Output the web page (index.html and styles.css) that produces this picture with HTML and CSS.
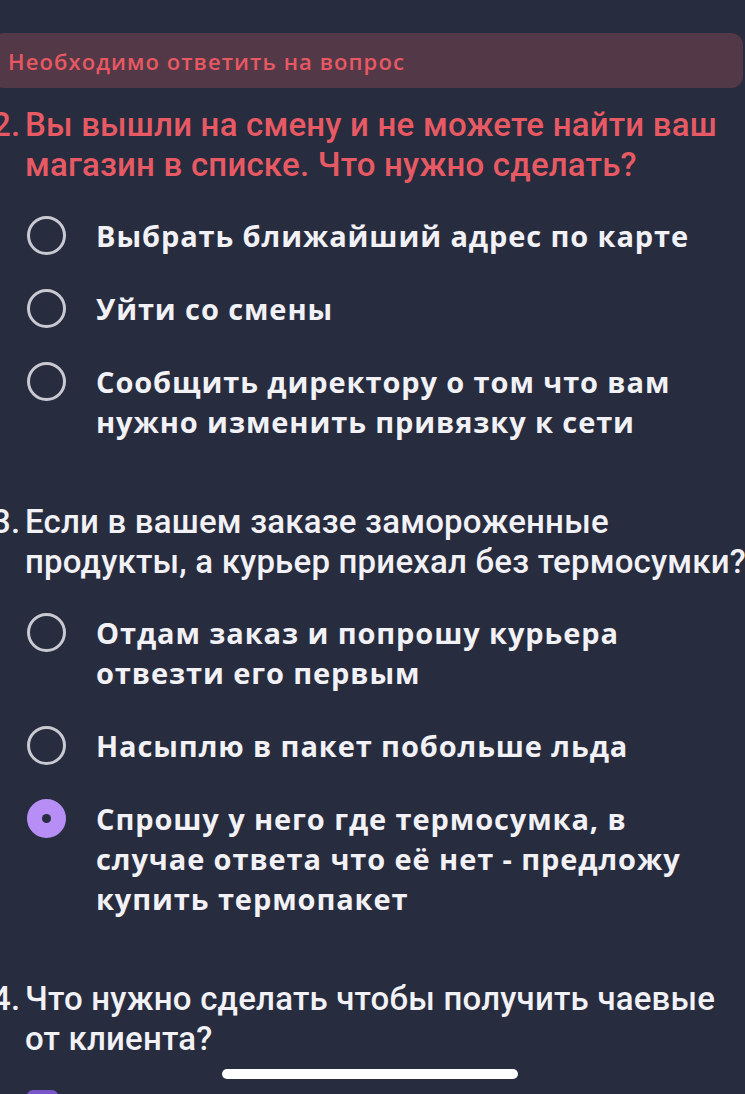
FILE: index.html
```html
<!DOCTYPE html>
<html lang="ru">
<head>
<meta charset="utf-8">
<link rel="stylesheet" href="styles.css">
</head>
<body>
<div class="page">
  <div class="banner">Необходимо ответить на вопрос</div>

  <div class="question error">
    <span class="num">2.</span>
    <span class="qtext">Вы вышли на смену и не можете найти ваш магазин в списке. Что нужно сделать?</span>
  </div>
  <ul class="options">
    <li class="option"><span class="radio"></span><span class="label">Выбрать ближайший адрес по карте</span></li>
    <li class="option"><span class="radio"></span><span class="label">Уйти со смены</span></li>
    <li class="option"><span class="radio"></span><span class="label">Сообщить директору о том что вам нужно изменить привязку к сети</span></li>
  </ul>

  <div class="question">
    <span class="num">3.</span>
    <span class="qtext">Если в вашем заказе замороженные продукты, а курьер приехал без термосумки?</span>
  </div>
  <ul class="options">
    <li class="option"><span class="radio"></span><span class="label">Отдам заказ и попрошу курьера отвезти его первым</span></li>
    <li class="option"><span class="radio"></span><span class="label">Насыплю в пакет побольше льда</span></li>
    <li class="option"><span class="radio checked"></span><span class="label">Спрошу у него где термосумка, в случае ответа что её нет - предложу купить термопакет</span></li>
  </ul>

  <div class="question">
    <span class="num">4.</span>
    <span class="qtext">Что нужно сделать чтобы получить чаевые от клиента?</span>
  </div>
  <ul class="options">
    <li class="option"><span class="checkbox"></span><span class="label">Вежливо общаться с курьером</span></li>
  </ul>
</div>
<div class="home-indicator"></div>
</body>
</html>
```
FILE: styles.css
```css
html, body {
  margin: 0;
  padding: 0;
}
body {
  width: 745px;
  height: 1094px;
  overflow: hidden;
  background: #272c3f;
  position: relative;
  font-family: "Open Sans", "Noto Sans", sans-serif;
  color: #f1f1f6;
}
.page {
  padding-top: 33px;
  margin-left: -8px;
  width: 760px;
}
.banner {
  background: #533848;
  border-radius: 12px;
  height: 55px;
  margin-right: 9px;
  display: flex;
  align-items: center;
  padding-left: 16px;
  color: #e85862;
  font-family: "Open Sans", sans-serif;
  font-weight: 600;
  font-size: 22px;
  letter-spacing: 1.1px;
}
.question {
  display: flex;
  padding-top: 4px;
  font-family: Roboto, "Noto Sans", sans-serif;
  font-weight: 500;
  font-size: 33px;
  letter-spacing: 0.2px;
  line-height: 40px;
  color: #f1f1f6;
}
.question.error {
  color: #e85a63;
  margin-top: 13px;
}
.num {
  flex: 0 0 33px;
  white-space: nowrap;
}
.qtext {
  flex: 1;
}
.options {
  list-style: none;
  margin: 0 0 56px 0;
  padding: 0 22px 0 35px;
}
.option {
  display: flex;
  align-items: flex-start;
  margin-top: 33px;
}
.option:first-child {
  margin-top: 31px;
}
.radio {
  flex: 0 0 auto;
  width: 33px;
  height: 33px;
  border: 3.5px solid #c9c9d2;
  border-radius: 50%;
  margin-right: 30px;
  box-sizing: content-box;
}
.radio.checked {
  background: #b68ef5;
  border-color: #b68ef5;
  position: relative;
}
.radio.checked::after {
  content: "";
  position: absolute;
  left: 50%;
  top: 50%;
  width: 9px;
  height: 9px;
  margin: -4.5px 0 0 -4.5px;
  border-radius: 50%;
  background: #272c3f;
}
.checkbox {
  flex: 0 0 auto;
  width: 31px;
  height: 31px;
  border-radius: 6px;
  background: #7a55c9;
  margin-right: 33px;
}
.label {
  flex: 1;
  font-family: "Open Sans", sans-serif;
  font-weight: 700;
  font-size: 29px;
  letter-spacing: 0.9px;
  line-height: 40px;
  color: #f1f1f6;
}
.home-indicator {
  position: absolute;
  left: 222px;
  top: 1069px;
  width: 296px;
  height: 10px;
  border-radius: 5px;
  background: #ffffff;
}
```
